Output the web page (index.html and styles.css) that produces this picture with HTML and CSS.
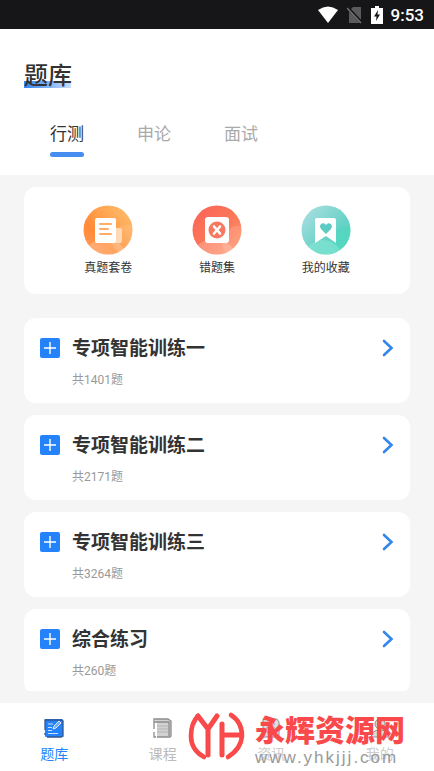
FILE: index.html
```html
<!DOCTYPE html>
<html lang="zh-CN">
<head>
<meta charset="utf-8">
<meta name="viewport" content="width=device-width, initial-scale=1">
<title>题库</title>
<link rel="stylesheet" href="styles.css">
</head>
<body>
<div class="status">
  <svg width="22" height="18" viewBox="0 0 22 18"><path d="M1 4Q11-3 21 4L11 17Z" fill="#fff"/></svg>
  <svg width="16" height="18" viewBox="0 0 16 18"><path d="M6 1H14V17H2V5Z" fill="#5a5a5c"/><path d="M0 1L15 17" stroke="#161618" stroke-width="3"/><path d="M0 2L14 17" stroke="#77777a" stroke-width="1.3"/></svg>
  <svg width="12" height="18" viewBox="0 0 12 18"><path d="M4 0H8V2H12V18H0V2H4Z" fill="#fff"/><path d="M7 4L3 10.500H5.500L5 15L9 8.500H6.500Z" fill="#161618"/></svg>
  <span class="clock">9:53</span>
</div>
<header class="header">
  <h1 class="title">题库</h1>
  <nav class="tabs">
    <button class="tab tab-active" type="button">行测</button>
    <button class="tab" type="button">申论</button>
    <button class="tab" type="button">面试</button>
  </nav>
</header>
<main class="content">
  <section class="card shortcuts">
    <a class="shortcut" href="#papers">
      <svg width="50" height="50" viewBox="0 0 50 50">
        <defs><linearGradient id="orange" x1="1" y1="0" x2="0" y2="1"><stop offset="0" stop-color="#ffc675"/><stop offset=".65" stop-color="#ff8b36"/><stop offset="1" stop-color="#ff9c60"/></linearGradient><clipPath id="disc"><circle cx="25" cy="25" r="24.500"/></clipPath></defs>
        <g clip-path="url(#disc)"><rect width="50" height="50" fill="url(#orange)"/><circle cx="44" cy="35" r="15" fill="#fff" opacity=".13"/><ellipse cx="22" cy="49" rx="20" ry="15" fill="#fff" opacity=".22"/></g>
        <rect x="28" y="23" width="11" height="15" rx="2" fill="#ffd9b5"/><rect x="12" y="13" width="21" height="25" rx="2" fill="#fff"/><path d="M17 19H28M17 24H25M17 29H28" stroke="#ffac67" stroke-width="2" stroke-linecap="round"/>
      </svg>
      <span>真题套卷</span>
    </a>
    <a class="shortcut" href="#mistakes">
      <svg width="50" height="50" viewBox="0 0 50 50">
        <defs><linearGradient id="red" x1="0" y1="0" x2="1" y2="1"><stop offset="0" stop-color="#fb6258"/><stop offset=".5" stop-color="#fb7758"/><stop offset="1" stop-color="#ff9b70"/></linearGradient></defs>
        <g clip-path="url(#disc)"><rect width="50" height="50" fill="url(#red)"/><circle cx="46" cy="37" r="16" fill="#fff" opacity=".13"/><ellipse cx="22" cy="49" rx="20" ry="15" fill="#fff" opacity=".22"/></g>
        <rect x="13" y="12" width="24" height="26" rx="3" fill="#fff"/><circle cx="25" cy="25" r="8.500" fill="#f87860"/><path d="M22 21.500L28 28.500M28 21.500L22 28.500" stroke="#fff" stroke-width="2.600" stroke-linecap="round"/>
      </svg>
      <span>错题集</span>
    </a>
    <a class="shortcut" href="#favorites">
      <svg width="50" height="50" viewBox="0 0 50 50">
        <defs><linearGradient id="teal" x1="0" y1="0" x2="1" y2="1"><stop offset="0" stop-color="#b5e0e5"/><stop offset=".6" stop-color="#67d2c6"/><stop offset="1" stop-color="#59d8c2"/></linearGradient></defs>
        <g clip-path="url(#disc)"><rect width="50" height="50" fill="url(#teal)"/><circle cx="46" cy="36" r="15" fill="#3fdaba" opacity=".35"/><ellipse cx="22" cy="50" rx="18" ry="15" fill="#8bead5" opacity=".5"/></g>
        <path d="M16 13H33Q35 13 35 15V38L25 31L14 38V15Q14 13 16 13Z" fill="#fff"/><path d="M25 29L20 24C17 20 22 16 25 20C28 16 33 20 30 24Z" fill="#5dcbc4"/>
      </svg>
      <span>我的收藏</span>
    </a>
  </section>
  <section class="list">
    <a class="card row" href="#train1">
      <svg class="plus" width="20" height="20" viewBox="0 0 20 20"><rect width="20" height="20" rx="2" fill="#2483fb"/><path d="M10 4V16M4 10H16" stroke="#fff" stroke-width="1.400"/></svg>
      <span class="text"><strong class="name">专项智能训练一</strong><span class="count">共1401题</span></span>
      <svg class="arrow" width="12" height="20" viewBox="0 0 12 20"><path d="M2 3L9.500 10L2 17" fill="none" stroke="#3286ec" stroke-width="2.600" stroke-linecap="round"/></svg>
    </a>
    <a class="card row" href="#train2">
      <svg class="plus" width="20" height="20" viewBox="0 0 20 20"><rect width="20" height="20" rx="2" fill="#2483fb"/><path d="M10 4V16M4 10H16" stroke="#fff" stroke-width="1.400"/></svg>
      <span class="text"><strong class="name">专项智能训练二</strong><span class="count">共2171题</span></span>
      <svg class="arrow" width="12" height="20" viewBox="0 0 12 20"><path d="M2 3L9.500 10L2 17" fill="none" stroke="#3286ec" stroke-width="2.600" stroke-linecap="round"/></svg>
    </a>
    <a class="card row" href="#train3">
      <svg class="plus" width="20" height="20" viewBox="0 0 20 20"><rect width="20" height="20" rx="2" fill="#2483fb"/><path d="M10 4V16M4 10H16" stroke="#fff" stroke-width="1.400"/></svg>
      <span class="text"><strong class="name">专项智能训练三</strong><span class="count">共3264题</span></span>
      <svg class="arrow" width="12" height="20" viewBox="0 0 12 20"><path d="M2 3L9.500 10L2 17" fill="none" stroke="#3286ec" stroke-width="2.600" stroke-linecap="round"/></svg>
    </a>
    <a class="card row" href="#mixed">
      <svg class="plus" width="20" height="20" viewBox="0 0 20 20"><rect width="20" height="20" rx="2" fill="#2483fb"/><path d="M10 4V16M4 10H16" stroke="#fff" stroke-width="1.400"/></svg>
      <span class="text"><strong class="name">综合练习</strong><span class="count">共260题</span></span>
      <svg class="arrow" width="12" height="20" viewBox="0 0 12 20"><path d="M2 3L9.500 10L2 17" fill="none" stroke="#3286ec" stroke-width="2.600" stroke-linecap="round"/></svg>
    </a>
  </section>
</main>
<nav class="bottom">
  <a class="item item-active" href="#bank">
    <svg width="20" height="20" viewBox="0 0 20 20"><rect x="1" y="1" width="18" height="18" rx="1" fill="#2483fb"/><path d="M1 12V2H17L19 3V18L17 19H3M1 15V17" fill="none" stroke="#34568c" stroke-width="1.300"/><path d="M4 6H9M4 9.500H8M4 12.500H8M4 15.500H14" stroke="#c9e0ff" stroke-width="1.200"/><path d="M9 11L10 8L15 3L17 5L12 10Z" fill="#73adfa" stroke="#fff" stroke-width=".8"/></svg>
    <span>题库</span>
  </a>
  <a class="item" href="#course">
    <svg width="20" height="20" viewBox="0 0 20 20"><path d="M3 1H15L18 4V19H4V4H2Z" fill="#d2d2d2"/><path d="M1 11V1H15L18 3V18L17 19H4M1 4H16V18M1 14V19H3" fill="none" stroke="#8c8c8c" stroke-width="1.300"/><path d="M4 8H15M4 11H15M4 14H15" stroke="#b5b5b5"/></svg>
    <span>课程</span>
  </a>
  <a class="item item-faint" href="#news">
    <svg width="20" height="20" viewBox="0 0 20 20"><path d="M2 1H16L18 4V19H2Z" fill="#ddd" stroke="#8c8c8c"/><path d="M5 6H14M5 10H14M5 14H14" stroke="#999"/></svg>
    <span>资讯</span>
  </a>
  <a class="item item-faint" href="#me">
    <svg width="20" height="20" viewBox="0 0 20 20"><circle cx="10" cy="6" r="5" fill="#ddd" stroke="#8c8c8c"/><path d="M1 19Q2 12 10 12Q18 12 19 19Z" fill="#ddd" stroke="#8c8c8c"/></svg>
    <span>我的</span>
  </a>
  <div class="mark">
    <svg width="64" height="60" viewBox="0 0 64 60"><g fill="none" stroke="#f9494b" stroke-width="4.600" stroke-linecap="round" stroke-linejoin="round"><path d="M12 10Q5 17 5 30Q5 44 18 51"/><path d="M12 10L22 23L31 10M22 23V49" stroke-width="5"/><path d="M36 18V49M36 29H53" stroke-width="5"/><path d="M45 9Q56 16 56 30Q55 43 42 51"/></g></svg>
    <div class="mark-text"><span class="mark-name">永辉资源网</span><span class="mark-url">www.yhkjjj.com</span></div>
  </div>
</nav>
</body>
</html>
```
FILE: styles.css
```css
* { box-sizing: border-box; }
body {
  margin: 0;
  height: 100vh;
  display: flex;
  flex-direction: column;
  overflow: hidden;
  background: #f5f5f5;
  color: #333;
  font-family: Roboto, "Noto Sans CJK SC", sans-serif;
}
a { color: inherit; text-decoration: none; }
svg { display: block; flex: none; }
.status {
  flex: none;
  height: 29px;
  padding: 0 10px;
  display: flex;
  align-items: center;
  justify-content: flex-end;
  gap: 8px;
  background: #161618;
}
.clock { color: #fff; font-size: 17px; font-weight: 500; line-height: 28px; }
.header { flex: none; height: 146px; padding: 30px 24px 0; background: #fff; }
.title {
  width: max-content;
  margin: 0;
  font-size: 24px;
  font-weight: 500;
  line-height: 34px;
  background: linear-gradient(to right, #3385f2, #c9ddfc) 0 22px / 47px 7px no-repeat;
}
.tabs { display: flex; align-items: flex-start; gap: 53px; padding: 28px 26px 0; }
.tab {
  padding: 0;
  border: 0;
  background: none;
  color: #aaa;
  font: inherit;
  font-size: 17px;
  line-height: 26px;
}
.tab-active { color: #333; }
.tab-active::after {
  content: "";
  display: block;
  height: 5px;
  margin-top: 5px;
  border-radius: 3px;
  background: #468df0;
}
.content { flex: 1; min-height: 0; overflow: hidden; margin: 12px 24px; }
.card { background: #fff; border-radius: 12px; }
.shortcuts {
  display: grid;
  grid-template-columns: repeat(3, 1fr);
  height: 107px;
  padding: 18px 30px 0;
}
.shortcut {
  display: flex;
  flex-direction: column;
  align-items: center;
  gap: 4px;
  font-size: 12px;
  line-height: 18px;
}
.list { display: flex; flex-direction: column; gap: 12px; margin-top: 24px; }
.row { display: flex; height: 85px; padding: 16px; }
.plus { margin-top: 4px; }
.text { flex: 1; margin-left: 12px; }
.name { display: block; font-size: 19px; font-weight: 700; line-height: 30px; }
.count { display: block; margin-top: 6px; color: #999; font-size: 12px; line-height: 20px; }
.arrow { margin-top: 4px; }
.bottom {
  position: relative;
  flex: none;
  display: grid;
  grid-template-columns: repeat(4, 1fr);
  height: 68px;
  padding-top: 15px;
  background: #fff;
}
.item {
  display: flex;
  flex-direction: column;
  align-items: center;
  gap: 6px;
  color: #bbb;
  font-size: 14px;
  line-height: 20px;
}
.item-active { color: #2483fb; }
.item-faint { color: #ccc; }
.mark { position: absolute; top: 3px; right: 26px; display: flex; gap: 5px; }
.mark-text { display: flex; flex-direction: column; padding: 7px 3px 0 0; }
.mark-name { color: #f9494b; font-size: 30px; font-weight: 900; line-height: 36px; }
.mark-url {
  color: #999;
  font-family: "Liberation Sans", sans-serif;
  font-size: 17px;
  letter-spacing: 2px;
  line-height: 18px;
}
```
